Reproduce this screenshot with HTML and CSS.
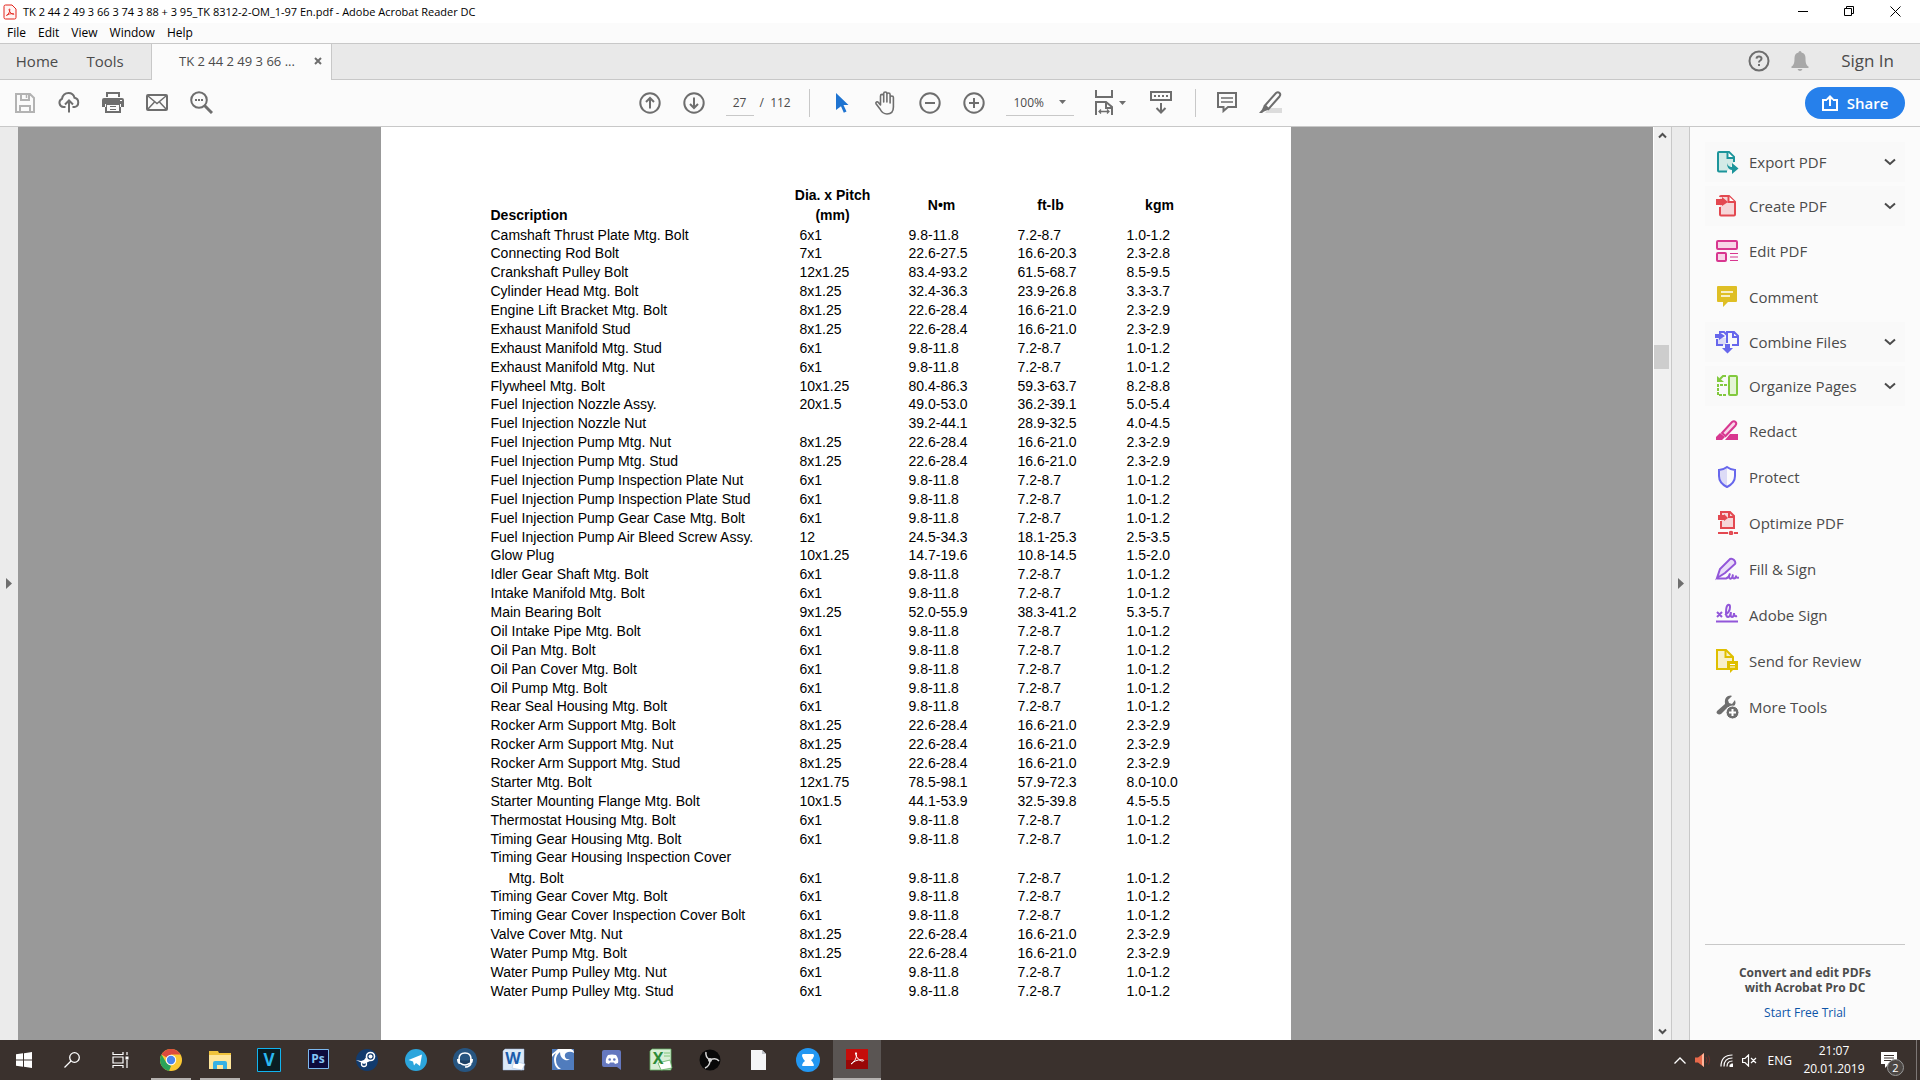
FILE: index.html
```html
<!DOCTYPE html>
<html lang="en">
<head>
    <meta charset="UTF-8">
    <meta name="viewport" content="width=device-width, initial-scale=1.0">
    <title>TK 2 44 2 49 3 66 3 74 3 88 + 3 95_TK 8312-2-OM_1-97 En.pdf - Adobe Acrobat Reader DC</title>
    <link rel="stylesheet" href="styles.css">
</head>
<body>

<header class="titlebar">
    <svg class="app-icon" width="14" height="16" viewBox="0 0 14 16" fill="none" stroke="#e2231a"><path d="M2.500 1h6.500l4 4v8.500q0 1.500-1.500 1.500h-9q-1.500 0-1.500-1.500v-11q0-1.500 1.500-1.500z" fill="#fff5f4"/><path d="M3.500 11.500C5.500 10.500 7 7.500 6.800 5.500c-.3-1.300-1-.5-.6.700.7 2.300 2.300 4 4.300 4.200 1 0 .5-1-.8-.9-2 .1-4.200.6-6 1.600z" stroke-width=".9"/></svg>
    <span class="window-title">TK 2 44 2 49 3 66 3 74 3 88 + 3 95_TK 8312-2-OM_1-97 En.pdf - Adobe Acrobat Reader DC</span>
    <div class="window-buttons">
        <button aria-label="Minimize"><svg width="11" height="11" viewBox="0 0 11 11" stroke="#000" fill="none"><path d="M0 5.500h10"/></svg></button>
        <button aria-label="Restore"><svg width="11" height="11" viewBox="0 0 11 11" stroke="#000" fill="none"><path d="M.5 2.500h7v7h-7zM2.500 2.500v-2h7v7h-2"/></svg></button>
        <button aria-label="Close"><svg width="11" height="11" viewBox="0 0 11 11" stroke="#000" fill="none"><path d="M.5.500l10 10M10.500.500l-10 10"/></svg></button>
    </div>
</header>

<nav class="menubar">
    <button>File</button>
    <button>Edit</button>
    <button>View</button>
    <button>Window</button>
    <button>Help</button>
</nav>

<div class="tabbar">
    <button class="tab-link">Home</button>
    <button class="tab-link">Tools</button>
    <div class="tab">
        <span>TK 2 44 2 49 3 66 ...</span>
        <button aria-label="Close tab"><svg width="8" height="8" viewBox="0 0 8 8" stroke="#6e6e6e" stroke-width="2"><path d="M1 1l6 6M7 1l-6 6"/></svg></button>
    </div>
    <div class="account">
        <button aria-label="Help"><svg width="22" height="22" viewBox="0 0 22 22" fill="none" stroke="#6e6e6e" stroke-width="2"><circle cx="11" cy="11" r="9.500"/><path d="M8.500 8.700q.2-2.200 2.500-2.200t2.500 1.900q0 1.300-1.300 2.100-1.200.7-1.200 2M11 14v2"/></svg></button>
        <button aria-label="Notifications"><svg width="18" height="20" viewBox="0 0 18 20" fill="#a8a8a8"><path d="M7.500 1.500q0-1.500 1.500-1.500t1.500 1.500c3 .8 4 3 4 5.500 0 4.500.5 7 3 8.500v1.500h-17v-1.500c2.500-1.500 3-4 3-8.500 0-2.500 1-4.700 4-5.500zM6.500 18h5q-.8 2-2.500 2t-2.500-2z"/></svg></button>
        <button class="sign-in">Sign In</button>
    </div>
</div>

<div class="toolbar">
    <div class="tools">
        <button aria-label="Save"><svg width="20" height="20" viewBox="0 0 20 20" fill="none" stroke="#b3b3b3" stroke-width="2"><path d="M1 1h14l4 4v14H1zM6 1v6h8V1M5 19v-6h10v6" /><path d="M11.500 2v3" stroke-width="1.500"/></svg></button>
        <button aria-label="Upload"><svg width="22" height="21" viewBox="0 0 22 21" fill="none" stroke="#6e6e6e" stroke-width="2"><path d="M7.500 15H5.500A4.300 4.300 0 0 1 4 6.800C4.800 2.800 7.500 1 10.500 1c3.300 0 5.300 2 6 4.800A4.700 4.700 0 0 1 16.500 15h-2M11 20.500V9M7 12.500L11 8.500l4 4"/></svg></button>
        <button aria-label="Print"><svg width="22" height="21" viewBox="0 0 22 21" fill="#6e6e6e"><path d="M4 0h14v5H4zM6 2v3h10V2z" fill-rule="evenodd"/><path d="M2 6h18q2 0 2 2v7h-4v-3H4v3H0V8q0-2 2-2zM3 12h16v9H3zM5 13v6h12v-6z" fill-rule="evenodd"/><path d="M8 14h6v1H8zM8 17h6v1H8z"/><path d="M18 8h2v1h-2z" fill="#fff"/></svg></button>
        <button aria-label="E-mail"><svg width="22" height="17" viewBox="0 0 22 17" fill="none" stroke="#6e6e6e" stroke-width="2"><rect x="1" y="1" width="20" height="15" rx="1"/><path d="M2 2l9 7.500L20 2M2 15l6.500-7M20 15l-6.500-7" stroke-width="1.500"/></svg></button>
        <button aria-label="Find"><svg width="23" height="23" viewBox="0 0 23 23" fill="none" stroke="#6e6e6e" stroke-width="2"><circle cx="9" cy="9" r="7.800"/><path d="M14.500 14.500l7.500 7.500" stroke-width="3"/><path d="M5 9h2M8 9h2M11 9h2"/></svg></button>
    </div>
    <div class="tools">
        <button aria-label="Previous page"><svg width="22" height="22" viewBox="0 0 22 22" fill="none" stroke="#6e6e6e" stroke-width="2"><circle cx="11" cy="11" r="9.700"/><path d="M11 16.500V6M7 10l4-4 4 4"/></svg></button>
        <button aria-label="Next page"><svg width="22" height="22" viewBox="0 0 22 22" fill="none" stroke="#6e6e6e" stroke-width="2"><circle cx="11" cy="11" r="9.700"/><path d="M11 5.500V16M7 12l4 4 4-4"/></svg></button>
        <input class="page-number" type="text" value="27" aria-label="Page number">
        <span class="page-total">/&nbsp; 112</span>
        <span class="separator"></span>
        <button aria-label="Select"><svg width="14" height="20" viewBox="0 0 14 20" fill="#1f74d1"><path d="M1 0l12.500 12H8.500l3 6.500-2.700 1.200L6 13.200 1 17z"/></svg></button>
        <button aria-label="Hand"><svg width="23" height="24" viewBox="0 0 23 24" fill="none" stroke="#6e6e6e" stroke-width="1.600" stroke-linejoin="round" stroke-linecap="round"><path d="M6.500 14V5q0-1.600 1.600-1.600T9.700 5v6V2.600Q9.700 1 11.300 1t1.600 1.600V11 3.600Q12.900 2 14.500 2t1.600 1.600V12 6.600Q16.100 5 17.700 5q1.700 0 1.700 1.600V16c0 4.500-2.400 7-6.400 7-3.700 0-5.200-1.500-7-5L2 12.800c-.7-1.700 1.200-2.800 2.400-1.300z"/></svg></button>
        <button aria-label="Zoom out"><svg width="22" height="22" viewBox="0 0 22 22" fill="none" stroke="#6e6e6e" stroke-width="2"><circle cx="11" cy="11" r="9.700"/><path d="M6 11h10"/></svg></button>
        <button aria-label="Zoom in"><svg width="22" height="22" viewBox="0 0 22 22" fill="none" stroke="#6e6e6e" stroke-width="2"><circle cx="11" cy="11" r="9.700"/><path d="M6 11h10M11 6v10"/></svg></button>
        <span class="zoom-box">
            <select aria-label="Zoom level"><option>100%</option><option>125%</option></select>
            <svg width="7" height="4" viewBox="0 0 7 4" fill="#6e6e6e"><path d="M0 0h7L3.500 4z"/></svg>
        </span>
        <button class="fit" aria-label="Fit width"><svg width="18" height="25" viewBox="0 0 18 25" fill="none" stroke="#6e6e6e" stroke-width="2"><path d="M1 0v7h16V0M1 25V12h10l6 5v8M11 12v6h6"/><path d="M4 21.500h10M6 19.500l-2 2 2 2M12 19.500l2 2-2 2" stroke-width="1.300"/></svg><svg width="7" height="4" viewBox="0 0 7 4" fill="#6e6e6e"><path d="M0 0h7L3.500 4z"/></svg></button>
        <button aria-label="Read mode"><svg width="22" height="23" viewBox="0 0 22 23" fill="none" stroke="#6e6e6e" stroke-width="2"><rect x="1" y="1" width="20" height="8"/><path d="M4 5h2M8 5h2M12 5h2M16 5h2M11 12v9M6.500 17l4.500 4.500 4.500-4.500"/></svg></button>
        <span class="separator last"></span>
        <button aria-label="Comment"><svg width="20" height="21" viewBox="0 0 20 21" fill="none" stroke="#6e6e6e" stroke-width="2"><path d="M1 1h18v14h-8l-4.500 4V15H1z"/><path d="M4 6h12M4 10h12" stroke-width="1.500"/></svg></button>
        <button aria-label="Highlight"><svg width="24" height="23" viewBox="0 0 24 23"><path d="M10 17h13v5H6z" fill="#dcdcdc"/><path d="M6 14.500L17 2q2-1.500 3.500 0t0 3.500L9.500 18z" fill="none" stroke="#6e6e6e" stroke-width="2"/><path d="M5 14l5 4.500-5 2-2 1.500H0l3-3.500z" fill="#6e6e6e"/></svg></button>
    </div>
    <button class="share"><svg width="16" height="16" viewBox="0 0 16 16" fill="none" stroke="#fff" stroke-width="2"><path d="M5 5H1v10h14V5h-4M8 11V2M5 4.500l3-3 3 3"/></svg>Share</button>
</div>

<main class="workspace">
    <button class="strip left-strip" aria-label="Open navigation pane"><svg width="6" height="11" viewBox="0 0 6 11" fill="#6e6e6e"><path d="M0 0l6 5.500L0 11z"/></svg></button>
    <div class="document">
        <article class="page">
            <table>
                <thead>
                    <tr><th class="desc">Description</th><th class="pitch"><span>Dia. x Pitch<br>(mm)</span></th><th>N•m</th><th>ft-lb</th><th>kgm</th></tr>
                </thead>
                <tbody>
                    <tr><td>Camshaft Thrust Plate Mtg. Bolt</td><td>6x1</td><td>9.8-11.8</td><td>7.2-8.7</td><td>1.0-1.2</td></tr>
                    <tr><td>Connecting Rod Bolt</td><td>7x1</td><td>22.6-27.5</td><td>16.6-20.3</td><td>2.3-2.8</td></tr>
                    <tr><td>Crankshaft Pulley Bolt</td><td>12x1.25</td><td>83.4-93.2</td><td>61.5-68.7</td><td>8.5-9.5</td></tr>
                    <tr><td>Cylinder Head Mtg. Bolt</td><td>8x1.25</td><td>32.4-36.3</td><td>23.9-26.8</td><td>3.3-3.7</td></tr>
                    <tr><td>Engine Lift Bracket Mtg. Bolt</td><td>8x1.25</td><td>22.6-28.4</td><td>16.6-21.0</td><td>2.3-2.9</td></tr>
                    <tr><td>Exhaust Manifold Stud</td><td>8x1.25</td><td>22.6-28.4</td><td>16.6-21.0</td><td>2.3-2.9</td></tr>
                    <tr><td>Exhaust Manifold Mtg. Stud</td><td>6x1</td><td>9.8-11.8</td><td>7.2-8.7</td><td>1.0-1.2</td></tr>
                    <tr><td>Exhaust Manifold Mtg. Nut</td><td>6x1</td><td>9.8-11.8</td><td>7.2-8.7</td><td>1.0-1.2</td></tr>
                    <tr><td>Flywheel Mtg. Bolt</td><td>10x1.25</td><td>80.4-86.3</td><td>59.3-63.7</td><td>8.2-8.8</td></tr>
                    <tr><td>Fuel Injection Nozzle Assy.</td><td>20x1.5</td><td>49.0-53.0</td><td>36.2-39.1</td><td>5.0-5.4</td></tr>
                    <tr><td>Fuel Injection Nozzle Nut</td><td></td><td>39.2-44.1</td><td>28.9-32.5</td><td>4.0-4.5</td></tr>
                    <tr><td>Fuel Injection Pump Mtg. Nut</td><td>8x1.25</td><td>22.6-28.4</td><td>16.6-21.0</td><td>2.3-2.9</td></tr>
                    <tr><td>Fuel Injection Pump Mtg. Stud</td><td>8x1.25</td><td>22.6-28.4</td><td>16.6-21.0</td><td>2.3-2.9</td></tr>
                    <tr><td>Fuel Injection Pump Inspection Plate Nut</td><td>6x1</td><td>9.8-11.8</td><td>7.2-8.7</td><td>1.0-1.2</td></tr>
                    <tr><td>Fuel Injection Pump Inspection Plate Stud</td><td>6x1</td><td>9.8-11.8</td><td>7.2-8.7</td><td>1.0-1.2</td></tr>
                    <tr><td>Fuel Injection Pump Gear Case Mtg. Bolt</td><td>6x1</td><td>9.8-11.8</td><td>7.2-8.7</td><td>1.0-1.2</td></tr>
                    <tr><td>Fuel Injection Pump Air Bleed Screw Assy.</td><td>12</td><td>24.5-34.3</td><td>18.1-25.3</td><td>2.5-3.5</td></tr>
                    <tr><td>Glow Plug</td><td>10x1.25</td><td>14.7-19.6</td><td>10.8-14.5</td><td>1.5-2.0</td></tr>
                    <tr><td>Idler Gear Shaft Mtg. Bolt</td><td>6x1</td><td>9.8-11.8</td><td>7.2-8.7</td><td>1.0-1.2</td></tr>
                    <tr><td>Intake Manifold Mtg. Bolt</td><td>6x1</td><td>9.8-11.8</td><td>7.2-8.7</td><td>1.0-1.2</td></tr>
                    <tr><td>Main Bearing Bolt</td><td>9x1.25</td><td>52.0-55.9</td><td>38.3-41.2</td><td>5.3-5.7</td></tr>
                    <tr><td>Oil Intake Pipe Mtg. Bolt</td><td>6x1</td><td>9.8-11.8</td><td>7.2-8.7</td><td>1.0-1.2</td></tr>
                    <tr><td>Oil Pan Mtg. Bolt</td><td>6x1</td><td>9.8-11.8</td><td>7.2-8.7</td><td>1.0-1.2</td></tr>
                    <tr><td>Oil Pan Cover Mtg. Bolt</td><td>6x1</td><td>9.8-11.8</td><td>7.2-8.7</td><td>1.0-1.2</td></tr>
                    <tr><td>Oil Pump Mtg. Bolt</td><td>6x1</td><td>9.8-11.8</td><td>7.2-8.7</td><td>1.0-1.2</td></tr>
                    <tr><td>Rear Seal Housing Mtg. Bolt</td><td>6x1</td><td>9.8-11.8</td><td>7.2-8.7</td><td>1.0-1.2</td></tr>
                    <tr><td>Rocker Arm Support Mtg. Bolt</td><td>8x1.25</td><td>22.6-28.4</td><td>16.6-21.0</td><td>2.3-2.9</td></tr>
                    <tr><td>Rocker Arm Support Mtg. Nut</td><td>8x1.25</td><td>22.6-28.4</td><td>16.6-21.0</td><td>2.3-2.9</td></tr>
                    <tr><td>Rocker Arm Support Mtg. Stud</td><td>8x1.25</td><td>22.6-28.4</td><td>16.6-21.0</td><td>2.3-2.9</td></tr>
                    <tr><td>Starter Mtg. Bolt</td><td>12x1.75</td><td>78.5-98.1</td><td>57.9-72.3</td><td>8.0-10.0</td></tr>
                    <tr><td>Starter Mounting Flange Mtg. Bolt</td><td>10x1.5</td><td>44.1-53.9</td><td>32.5-39.8</td><td>4.5-5.5</td></tr>
                    <tr><td>Thermostat Housing Mtg. Bolt</td><td>6x1</td><td>9.8-11.8</td><td>7.2-8.7</td><td>1.0-1.2</td></tr>
                    <tr><td>Timing Gear Housing Mtg. Bolt</td><td>6x1</td><td>9.8-11.8</td><td>7.2-8.7</td><td>1.0-1.2</td></tr>
                    <tr><td>Timing Gear Housing Inspection Cover</td><td></td><td></td><td></td><td></td></tr>
                    <tr class="continued"><td>Mtg. Bolt</td><td>6x1</td><td>9.8-11.8</td><td>7.2-8.7</td><td>1.0-1.2</td></tr>
                    <tr><td>Timing Gear Cover Mtg. Bolt</td><td>6x1</td><td>9.8-11.8</td><td>7.2-8.7</td><td>1.0-1.2</td></tr>
                    <tr><td>Timing Gear Cover Inspection Cover Bolt</td><td>6x1</td><td>9.8-11.8</td><td>7.2-8.7</td><td>1.0-1.2</td></tr>
                    <tr><td>Valve Cover Mtg. Nut</td><td>8x1.25</td><td>22.6-28.4</td><td>16.6-21.0</td><td>2.3-2.9</td></tr>
                    <tr><td>Water Pump Mtg. Bolt</td><td>8x1.25</td><td>22.6-28.4</td><td>16.6-21.0</td><td>2.3-2.9</td></tr>
                    <tr><td>Water Pump Pulley Mtg. Nut</td><td>6x1</td><td>9.8-11.8</td><td>7.2-8.7</td><td>1.0-1.2</td></tr>
                    <tr><td>Water Pump Pulley Mtg. Stud</td><td>6x1</td><td>9.8-11.8</td><td>7.2-8.7</td><td>1.0-1.2</td></tr>
                </tbody>
            </table>
        </article>
    </div>
    <div class="scrollbar">
        <svg width="9" height="7" viewBox="0 0 9 7" fill="none" stroke="#505050" stroke-width="2"><path d="M1 5.500L4.500 2 8 5.500"/></svg>
        <div class="track"><div class="thumb"></div></div>
        <svg width="9" height="7" viewBox="0 0 9 7" fill="none" stroke="#505050" stroke-width="2"><path d="M1 1.500L4.500 5 8 1.500"/></svg>
    </div>
    <button class="strip right-strip" aria-label="Close tools pane"><svg width="6" height="11" viewBox="0 0 6 11" fill="#6e6e6e"><path d="M0 0l6 5.500L0 11z"/></svg></button>
    <aside class="panel">
        <ul>
            <li class="expand"><a href="#"><svg viewBox="0 0 24 24" fill="none" stroke="#1d959b" stroke-width="2"><path d="M12 21.500H4q-1 0-1-1V3q0-1 1-1h10l5 5v5" fill="#d2eae6"/><path d="M12.500 2v6H19" fill="#fff"/><path d="M12 13q1 4 5 4v-4l6.500 5.500L17 24v-4q-5-.5-5-7z" fill="#1d959b" stroke="none"/></svg>Export PDF</a><svg class="chevron" viewBox="0 0 12 8"><path d="M1 1.500l5 4.500 5-4.500"/></svg></li>
            <li class="expand"><a href="#"><svg viewBox="0 0 24 24" fill="none" stroke="#e34850" stroke-width="2"><path d="M5 13v7.500q0 1 1 1h13q1 0 1-1V8l-6-6H6q-1 0-1 1" fill="#f6d6d8"/><path d="M13.500 2v6H20" fill="#fff"/><path d="M1 5h6V3l6 5-6 4v-1H1z" fill="#e34850" stroke="none"/></svg>Create PDF</a><svg class="chevron" viewBox="0 0 12 8"><path d="M1 1.500l5 4.500 5-4.500"/></svg></li>
            <li><a href="#"><svg viewBox="0 0 24 24" fill="#f8d5e8" stroke="#d83790" stroke-width="2"><rect x="2" y="2" width="20" height="8" rx="1"/><rect x="2" y="14" width="9" height="8" rx="1"/><path d="M15 14.500h8M15 18h8M15 21.500h8" stroke-width="1.200"/></svg>Edit PDF</a></li>
            <li><a href="#"><svg viewBox="0 0 24 24" fill="#dfbf25"><path d="M3 1h18q1 0 1 1v14q0 1-1 1h-8l-5 5v-5H3q-1 0-1-1V2q0-1 1-1z"/><path d="M6 7h12M6 11h9" stroke="#fff" stroke-width="1.500"/></svg>Comment</a></li>
            <li class="expand"><a href="#"><svg viewBox="0 0 24 24" fill="none" stroke="#6767ec" stroke-width="2"><path d="M3 8h8v7H3z" fill="#dddcf6" stroke="none"/><path d="M2 9v6h6M4 2h5l3 3 0-3h7l4 4v9h-6M12 3v10M18 2v5h5"/><path d="M0 4h4V2l6 4-6 4V8H0zM10 14h5v4h3l-5.500 5.500L7 18h3z" fill="#6767ec" stroke="none"/></svg>Combine Files</a><svg class="chevron" viewBox="0 0 12 8"><path d="M1 1.500l5 4.500 5-4.500"/></svg></li>
            <li class="expand"><a href="#"><svg viewBox="0 0 24 24" fill="none" stroke="#82c93e" stroke-width="2"><rect x="14" y="2" width="8" height="19" rx="1" fill="#e4f4d5"/><path d="M12 11H3v10h9" stroke-dasharray="3 1"/><path d="M11 2H8L5 5"/><path d="M2 2v6h7z" fill="#82c93e" stroke="none"/></svg>Organize Pages</a><svg class="chevron" viewBox="0 0 12 8"><path d="M1 1.500l5 4.500 5-4.500"/></svg></li>
            <li><a href="#"><svg viewBox="0 0 24 24" fill="#f8d5e8" stroke="#d83790" stroke-width="2"><path d="M7 14L17 3q2-1.500 3.500 0t0 3.500L10.500 17z"/><path d="M5 14l5 4-3 3H1v-3zM10 21l5-6h8v6z" fill="#d83790" stroke="none"/></svg>Redact</a></li>
            <li><a href="#"><svg viewBox="0 0 24 24"><path d="M12 2q-4 3-8 3v7q0 7 8 11z" fill="#dddcf6"/><path d="M12 2q-4 3-8 3v6q0 7 8 11 8-4 8-11V5q-4 0-8-3z" fill="none" stroke="#6767ec" stroke-width="2"/></svg>Protect</a></li>
            <li><a href="#"><svg viewBox="0 0 24 24" fill="none" stroke="#e34850" stroke-width="2"><path d="M6 10v7h13V5l-4-4H6v3" fill="#f6d6d8"/><path d="M14 1v5h5"/><path d="M3 4h6V3l4 4-4 3V9H3z" fill="#e34850" stroke="none"/><path d="M3 22h10M19 22h4"/><circle cx="16" cy="22" r="1.300"/></svg>Optimize PDF</a></li>
            <li><a href="#"><svg viewBox="0 0 24 24" fill="none" stroke="#9256d9" stroke-width="2"><path d="M2 21l3-9L15 2q2-1 4 1t1 4L10 16q-3 2-8 5z" fill="#e9ddf8"/><path d="M2 21.500h9q3-1 4-5-2 4 0 5t3-4q-1 4 1 4t2-3q0 3 3 2"/></svg>Fill &amp; Sign</a></li>
            <li><a href="#"><svg viewBox="0 0 24 24" fill="none" stroke="#9256d9" stroke-width="2"><path d="M2 9l5 5M7 9l-5 5M10 12q5-3 5-8 0-3-2-2t-2 8q0 4 2 4t3-5q-1 5 1 5t2-4q0 4 3 3M1 18.500h22"/></svg>Adobe Sign</a></li>
            <li><a href="#"><svg viewBox="0 0 24 24" fill="none" stroke="#dfbf00" stroke-width="2"><path d="M12 20H2V1h9l7 7v4" fill="#f8f0cb"/><path d="M10.500 1v7H18"/><path d="M13 12h10v9h-5l-3 3v-3h-3v-9z" fill="#dfbf00" stroke="none"/><path d="M15 15.500h5M15 18h5" stroke="#fff" stroke-width="1"/></svg>Send for Review</a></li>
            <li><a href="#"><svg viewBox="0 0 24 24" fill="#6e6e6e"><path d="M2 16l8-7Q9 3 13 1q3-1 4 0l-4 4 1 3 3 1 3-4q2 6-4 7-2 0-3 0L6 19q-2 1-4-.5-1-1 0-2.500z"/><circle cx="17.500" cy="17.500" r="6.500" stroke="#fbfbfb"/><path d="M14 17.500h7M17.500 14v7" stroke="#fff" stroke-width="2"/></svg>More Tools</a></li>
        </ul>
        <div class="promo">
            <strong>Convert and edit PDFs with Acrobat Pro DC</strong>
            <a href="#">Start Free Trial</a>
        </div>
    </aside>
</main>

<footer class="taskbar">
    <button aria-label="Start"><svg width="16" height="16" viewBox="0 0 16 16" fill="#fff"><path d="M0 2.300L7 1.300v6.200H0zM8 1.200L16 0v7.500H8zM0 8.500h7v6.200l-7-1zM8 8.500h8V16l-8-1.200z"/></svg></button>
    <button aria-label="Search"><svg width="16" height="16" viewBox="0 0 16 16" fill="none" stroke="#fff" stroke-width="1.300"><circle cx="10.500" cy="5.500" r="4.800"/><path d="M7 9L.500 15.500"/></svg></button>
    <button aria-label="Task view"><svg width="17" height="16" viewBox="0 0 17 16" fill="none" stroke="#fff" stroke-width="1.200"><path d="M1 0v2.500h10V0M1 16v-2.500h10V16M1 5h10v6H1zM15 0v3M15 8v8"/><path d="M13.500 4.500h3v3h-3z" fill="#fff" stroke="none"/></svg></button>
    <div class="apps">
        <button class="running" aria-label="Chrome"><svg viewBox="0 0 24 24"><circle cx="12" cy="12" r="11" fill="#fbc934"/><path d="M12 12L2.500 6.500A11 11 0 0 1 21.500 6.500H12z" fill="#dd4b3e"/><path d="M2.500 6.500L7.500 15l4.500 3-2 4.900A11 11 0 0 1 2.500 6.500z" fill="#2aa35a"/><circle cx="12" cy="12" r="5.200" fill="#fff"/><circle cx="12" cy="12" r="4.200" fill="#4a86ee"/></svg></button>
        <button class="running" aria-label="File Explorer"><svg viewBox="0 0 24 24"><path d="M1 3h9l1 2h12v16H1z" fill="#f0c33c"/><path d="M1 7h22v14H1z" fill="#ffe69b"/><path d="M5 21v-6q0-2 2-2h10q2 0 2 2v6h-4v-4H9v4z" fill="#36b1e5"/></svg></button>
        <button aria-label="Vegas"><svg viewBox="0 0 24 24"><path d="M.500.500h23v23H.500z" fill="#0a1c22" stroke="#12b4ef"/><text x="12" y="18" class="logo-text" fill="#2bb8f0" font-size="17">V</text></svg></button>
        <button aria-label="Photoshop"><svg viewBox="0 0 24 24"><path d="M2.500 1.500h20v19h-20z" fill="#0c0a3c" stroke="#7db8ee"/><text x="12" y="15" class="logo-text" fill="#86c5f5" font-size="12">Ps</text></svg></button>
        <button aria-label="Steam"><svg viewBox="0 0 24 24"><circle cx="12" cy="12" r="11" fill="#123b6d"/><path d="M1 12l8 4 6-3-3-5-3 4-3 1z" fill="#fff"/><circle cx="15.500" cy="8.500" r="4" fill="#123b6d" stroke="#fff" stroke-width="1.600"/><circle cx="15.500" cy="8.500" r="2" fill="#fff"/><circle cx="9" cy="16" r="2.500" fill="none" stroke="#fff" stroke-width="1.300"/></svg></button>
        <button aria-label="Telegram"><svg viewBox="0 0 24 24"><circle cx="12" cy="12" r="11" fill="#2ca5dc"/><path d="M4.500 12L18 6.500 16 18l-4-3-2 2.500-1-4z" fill="#fff"/></svg></button>
        <button aria-label="TeamSpeak"><svg viewBox="0 0 24 24"><circle cx="12" cy="12" r="12" fill="#275580"/><path d="M6 11Q6 5 12 5t6 6" fill="none" stroke="#fff" stroke-width="1.600"/><path d="M7 12q5 1 10 0 0 4-5 4t-5-4z" fill="#1c3f63"/><path d="M4 11h3v5H6q-2-1-2-5zM20 11h-3v5h1q2-1 2-5z" fill="#fff"/><path d="M7 15q5 4 10 0M18 16q-2 3-6 3" fill="none" stroke="#fff" stroke-width="1.500"/></svg></button>
        <button aria-label="Word"><svg viewBox="0 0 24 24"><path d="M1 3l2-2h19v21H1z" fill="#dce9f7" stroke="#9cbbe0" stroke-width=".5"/><path d="M12 13l11 3-3 6-10-2z" fill="#fff" stroke="#9cbbe0" stroke-width=".5"/><text x="11" y="16" class="logo-text" fill="#1b5cab" font-size="16">W</text></svg></button>
        <button aria-label="File viewer"><svg viewBox="0 0 24 24"><path d="M1 1h22v21H1z" fill="#507cbd"/><path d="M1 6Q5 3 7 1h13q3 1 3 4-3-2-6-1-4 1-3 5 1 3 5 2-2 2-5 1-5-2-5-8-4 3-4 8 0 6 5 9h-3Q3 18 3 11q0-3 2-6-2 1-4 4z" fill="#fff"/></svg></button>
        <button aria-label="Discord"><svg viewBox="0 0 24 24"><path d="M4 2h15q2 0 2 2v18l-4-3H4q-2 0-2-2V4q0-2 2-2z" fill="#6578bf"/><path d="M8 7q4-1 8 0 3 4 2 8l-3 1-1-1.500h-4L9 16l-3-1q-1-4 2-8z" fill="#fff"/><circle cx="9.700" cy="11.500" r="1.300" fill="#6578bf"/><circle cx="14.300" cy="11.500" r="1.300" fill="#6578bf"/></svg></button>
        <button aria-label="Excel"><svg viewBox="0 0 24 24"><path d="M1 3l2-2h19v21H1z" fill="#d9efd7" stroke="#62ae63" stroke-width=".8"/><path d="M15 5h6M15 8h6" stroke="#81c67c"/><path d="M9 15l12-3 2 8-11 2z" fill="#fff" stroke="#62ae63" stroke-width=".8"/><text x="9" y="16" class="logo-text" fill="#2d8b38" font-size="16">X</text></svg></button>
        <button aria-label="OBS"><svg viewBox="0 0 24 24"><circle cx="12" cy="12" r="10.500" fill="#080808"/><path d="M12 12q-5-3-4-8M12 12q6-3 9 1M12 12q0 6-5 8" fill="none" stroke="#d5d5d5" stroke-width="1.500"/><circle cx="12" cy="12" r="2" fill="#d5d5d5"/></svg></button>
        <button aria-label="Document"><svg viewBox="0 0 24 24"><path d="M4 2h11l4 4v16H4z" fill="#f4f5f7"/><path d="M15 2v4h4z" fill="#bfc3c9"/></svg></button>
        <button aria-label="Z client"><svg viewBox="0 0 24 24"><circle cx="12" cy="12" r="12" fill="#2297f2"/><path d="M7 6h10q1 0 1 2-1 3-3 4 2 2 3 5 0 1-1 1H7q-1 0-1-1 1-3 3-4-2-2-3-5 0-2 1-2z" fill="#fff"/></svg></button>
        <button class="running active" aria-label="Acrobat Reader"><svg viewBox="0 0 24 24"><path d="M1 1h22v20H1z" fill="#c50d0b"/><path d="M1 12h22v9H1z" fill="#990807"/><path d="M6 16c4-2 6-7 5.500-11-.3-1-1.500-.5-.9 1 1 4 4 7 7 7 2 0 1-1.500-1-1.300-4 0-8 1.500-10.600 4.300z" fill="none" stroke="#fff"/></svg></button>
    </div>
    <div class="tray">
        <button aria-label="Show hidden icons"><svg width="12" height="7" viewBox="0 0 12 7" fill="none" stroke="#fff" stroke-width="1.300"><path d="M.5 6.500L6 1l5.500 5.500"/></svg></button>
        <button aria-label="Audio manager"><svg width="16" height="14" viewBox="0 0 16 14"><path d="M0 4.500h3L9 0v14L3 9.500H0z" fill="#e8694a"/><path d="M7 2l2-2v14l-2-2z" fill="#ffb69c"/><path d="M11 4q2 3 0 6M13.500 2.500q2.500 4.500 0 9" fill="none" stroke="#71302a"/></svg></button>
        <button aria-label="Network"><svg width="13" height="13" viewBox="0 0 13 13" fill="none" stroke="#fff" stroke-width="1.200"><path d="M1 12.500Q1 1 12.500 1M4 12.500Q4 4 12.500 4M7 12.500Q7 7 12.500 7"/><path d="M9.500 13V11l2-1.500H13V13z" fill="#fff" stroke="none"/></svg></button>
        <button aria-label="Volume muted"><svg width="15" height="13" viewBox="0 0 15 13" fill="none" stroke="#fff" stroke-width="1.200"><path d="M.6 4.500H3l3.500-3.500v11L3 8.500H.6zM9 4l5 5M14 4L9 9"/></svg></button>
        <span class="language">ENG</span>
        <span class="clock">21:07<br>20.01.2019</span>
        <button class="notifications" aria-label="Notifications"><svg width="16" height="16" viewBox="0 0 16 16"><path d="M0 0h16v12H8l-4 4v-4H0z" fill="#fff"/><path d="M3 3.500h10M3 6h10M3 8.500h7" stroke="#3a312d"/></svg><span class="badge">2</span></button>
    </div>
</footer>

</body>
</html>
```

FILE: styles.css
```css
* {
    box-sizing: border-box;
}
body {
    margin: 0;
    height: 100vh;
    display: flex;
    flex-direction: column;
    overflow: hidden;
    background: #fbfbfb;
    color: #4b4b4b;
    font-family: "Segoe UI", "Open Sans", sans-serif;
    font-size: 12px;
}
button {
    display: flex;
    align-items: center;
    justify-content: center;
    padding: 0;
    border: none;
    background: none;
    color: inherit;
    font: inherit;
    cursor: pointer;
}
svg {
    flex: none;
}
a {
    color: inherit;
    text-decoration: none;
}

/* window frame */
.titlebar {
    display: flex;
    align-items: center;
    flex: none;
    height: 23px;
    padding-left: 3px;
    background: #fff;
    color: #000;
    font-size: 11px;
}
.window-title {
    margin-left: 6px;
}
.window-buttons {
    display: flex;
    margin-left: auto;
    padding-right: 2px;
}
.window-buttons button {
    width: 46px;
    height: 20px;
}
.menubar {
    display: flex;
    gap: 12px;
    flex: none;
    height: 20px;
    padding: 0 0 2px 7px;
    color: #000;
}
.tabbar {
    display: flex;
    flex: none;
    height: 37px;
    border-top: 1px solid #c8c8c8;
    border-bottom: 1px solid #c8c8c8;
    background: #e9e9e9;
    font-size: 15px;
}
.tab-link {
    width: 68px;
    padding: 0 0 2px 6px;
}
.tab {
    display: flex;
    align-items: center;
    justify-content: space-between;
    width: 181px;
    height: 36px;
    margin-left: 15px;
    padding: 0 9px 2px 27px;
    border: solid #c8c8c8;
    border-width: 0 1px;
    background: #fbfbfb;
    font-size: 13px;
}
.account {
    display: flex;
    align-items: center;
    gap: 21px;
    margin-left: auto;
    padding: 0 26px 2px 0;
}
.sign-in {
    margin-left: 11px;
    font-size: 17px;
}

/* toolbar */
.toolbar {
    display: grid;
    grid-template-columns: 1fr auto 1fr;
    align-items: center;
    flex: none;
    height: 47px;
    padding: 0 3px 1px;
    border-bottom: 1px solid #c8c8c8;
}
.tools {
    display: flex;
    align-items: center;
}
.tools button {
    width: 44px;
    height: 40px;
}
.tools .fit {
    gap: 6px;
    width: 56px;
    margin-left: 9px;
}
.page-number {
    width: 28px;
    height: 27px;
    margin: 0 6px 0 10px;
    padding: 0;
    border: none;
    border-bottom: 1px solid #c8c8c8;
    background: none;
    color: #4b4b4b;
    font: inherit;
    text-align: center;
}
.page-total {
    width: 30px;
    white-space: nowrap;
}
.separator {
    width: 1px;
    height: 28px;
    margin: 0 10px 0 19px;
    background: #c8c8c8;
}
.separator.last {
    margin: 0 9px 0 12px;
}
.zoom-box {
    display: flex;
    align-items: center;
    position: relative;
    width: 68px;
    height: 27px;
    margin-left: 10px;
    border-bottom: 1px solid #c8c8c8;
}
.zoom-box select {
    appearance: none;
    width: 100%;
    padding: 0 8px;
    border: none;
    background: none;
    color: #4b4b4b;
    font: inherit;
}
.zoom-box svg {
    position: absolute;
    right: 8px;
    pointer-events: none;
}
.share {
    justify-self: end;
    gap: 9px;
    width: 100px;
    height: 32px;
    margin-right: 12px;
    border-radius: 16px;
    background: #2680eb;
    color: #fff;
    font-size: 15px;
    font-weight: 600;
}

/* document area */
.workspace {
    display: flex;
    flex: 1;
    min-height: 0;
}
.strip {
    flex: none;
    width: 18px;
    background: #ebebeb;
}
.right-strip {
    width: 19px;
    border: solid #c8c8c8;
    border-width: 0 1px;
}
.document {
    flex: 1;
    overflow: hidden;
    background: #999;
}
.page {
    width: 910px;
    min-height: 100%;
    margin: 0 auto;
    padding: 58px 96px 0 110px;
    background: #fff;
}
table {
    width: 100%;
    table-layout: fixed;
    border-collapse: collapse;
    color: #000;
    font: 14px/18px "Liberation Sans", Arial, sans-serif;
}
th, td {
    height: 19px;
    padding: 0;
    text-align: left;
    white-space: nowrap;
}
th {
    width: 109px;
    height: 40px;
    padding-right: 43px;
    text-align: center;
    line-height: 20px;
}
th.desc {
    width: 309px;
    padding: 0;
    text-align: left;
    vertical-align: bottom;
}
th.pitch span {
    display: block;
    margin: 0 -6px;
}
tbody tr:nth-child(8n+2) td,
.continued + tr td {
    height: 18px;
}
.continued td {
    height: 21px;
    vertical-align: bottom;
}
.continued td:first-child {
    padding-left: 18px;
}
.scrollbar {
    display: flex;
    flex-direction: column;
    align-items: center;
    width: 18px;
    padding: 5px 1px 5px 0;
    border-left: 1px solid #fff;
    background: #f0f0f0;
}
.track {
    display: grid;
    grid-template-rows: 206fr 24fr 659fr;
    flex: 1;
    width: 100%;
}
.thumb {
    grid-row: 2;
    width: 15px;
    background: #cdcdcd;
}

/* tools panel */
.panel {
    display: flex;
    flex-direction: column;
    width: 230px;
    padding: 15px;
    font-size: 15px;
}
.panel ul {
    margin: 0;
    padding: 0;
    list-style: none;
}
.panel li {
    display: flex;
    align-items: center;
    height: 46px;
    padding: 0 9px 0 10px;
}
.panel li.expand {
    height: 40px;
    background: #f9f9f9;
}
.panel li:not(.expand) + .expand,
.panel .expand + li {
    margin-top: 2px;
}
.panel .expand + .expand {
    margin-top: 4px;
}
.panel li a {
    display: flex;
    align-items: center;
    flex: 1;
    gap: 10px;
}
.panel li a svg {
    width: 24px;
    height: 24px;
}
.panel .chevron {
    width: 12px;
    height: 8px;
    fill: none;
    stroke: #4b4b4b;
    stroke-width: 2px;
}
.promo {
    display: flex;
    flex-direction: column;
    align-items: center;
    gap: 10px;
    margin-top: auto;
    padding: 20px 24px 5px;
    border-top: 1px solid #c8c8c8;
    font-size: 12px;
    line-height: 15px;
    text-align: center;
}
.promo strong {
    width: 152px;
}
.promo a {
    color: #0d55a8;
}

/* windows taskbar */
.taskbar {
    display: flex;
    flex: none;
    height: 40px;
    background: #3a312d;
    color: #fff;
}
.taskbar > button {
    width: 48px;
}
.apps {
    display: flex;
    gap: 1px;
    margin-left: 3px;
}
.apps button {
    width: 48px;
    padding: 1px 0;
}
.apps svg {
    width: 24px;
    height: 24px;
}
.apps .running {
    background: linear-gradient(#b5b2b0, #b5b2b0) bottom / 40px 2px no-repeat;
}
.apps .active {
    background: #5a5553;
    box-shadow: inset 0 -2px #b5b2b0;
}
.logo-text {
    font-family: "Open Sans", sans-serif;
    font-weight: 700;
    text-anchor: middle;
}
.tray {
    display: flex;
    align-items: center;
    gap: 9px;
    margin-left: auto;
    padding-right: 3px;
}
.language {
    margin: 0 2px;
}
.clock {
    width: 62px;
    line-height: 18px;
    text-align: center;
}
.notifications {
    position: relative;
    width: 43px;
    height: 40px;
    padding-right: 12px;
    border-right: 1px solid #7d7775;
}
.badge {
    position: absolute;
    right: 12px;
    bottom: 4px;
    width: 17px;
    height: 17px;
    border: 1px solid #999;
    border-radius: 50%;
    background: #4c4744;
    font-size: 11px;
    line-height: 15px;
}
```
